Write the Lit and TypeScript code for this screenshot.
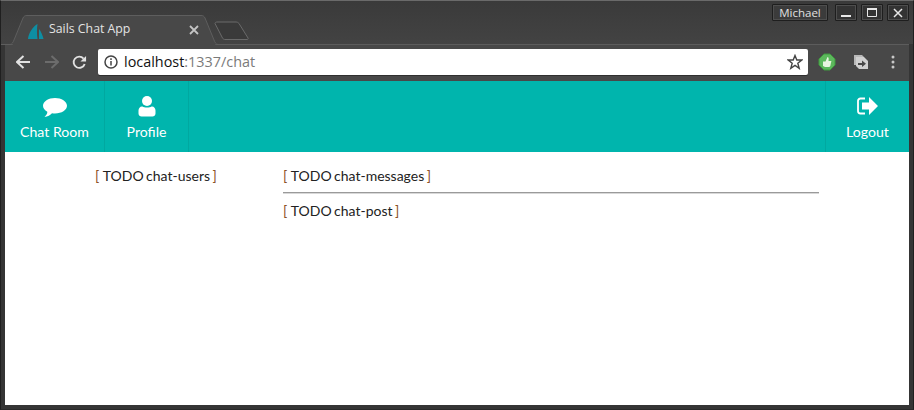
import { LitElement, html, css } from "lit";
import { customElement } from "lit/decorators.js";

@customElement("app-root")
export class AppRoot extends LitElement {
  static styles = css`
    :host { display: block; width: 914px; height: 410px; overflow: hidden; }
    * { box-sizing: border-box; }
    .window { width: 914px; height: 410px; display: flex; flex-direction: column; background: #353535; border-top: 1px solid #6a6a6a; border-left: 1px solid #1f1f1f; border-right: 1px solid #1f1f1f; border-bottom: 1px solid #2a2a2a; padding: 0 4px 4px 4px; }
    .strip { height: 43px; flex: none; margin: 0 -4px; padding: 0 4px; background: linear-gradient(#3a3a3a, #434343); display: flex; position: relative; z-index: 1; }
    .tab { position: absolute; left: 0; top: -1px; }
    .tab-label { position: absolute; left: 48px; top: 19px; font: 12.3px/18px "Open Sans", sans-serif; color: #e4e4e4; white-space: nowrap; }
    .tab-close { position: absolute; left: 188px; top: 24px; }
    .sail { position: absolute; left: 26px; top: 22px; }
    .controls { position: absolute; right: 4px; top: 3px; display: flex; gap: 4px; align-items: flex-start; }
    .user { width: 56px; height: 17px; margin-right: 3px; border: 1px solid #1e1e1e; outline: 1px solid #4e4e4e; outline-offset: -2px; background: #3b3b3b; color: #e0e0e0; font: 11.5px/15px "Open Sans", sans-serif; text-align: center; border-radius: 1px; }
    .ctl { width: 22px; height: 17px; border: 1px solid #1e1e1e; outline: 1px solid #4e4e4e; outline-offset: -2px; background: #333; display: flex; align-items: center; justify-content: center; border-radius: 1px; }
    .toolbar { height: 37px; flex: none; background: #484848; border-top: 1px solid #5c5c5c; display: flex; align-items: center; padding: 0 0 2px 0; position: relative; }
    .nav-ic { display: flex; justify-content: center; margin-top: 1px; }
    .back { width: 26px; margin-left: 5px; }
    .fwd { width: 16px; }
    .reload { width: 26px; }
    .navs { display: flex; gap: 7px; margin-right: 6px; }
    .omni { width: 710px; height: 26px; background: #fff; border-radius: 2px; display: flex; align-items: center; padding: 0 5px 0 6px; box-shadow: 0 1px 0 #2f2f2f; font: 14.4px/18px "Open Sans", sans-serif; }
    .url { margin-left: 6px; flex: 1; color: #111; }
    .url span { color: #7a7a7a; }
    .ext { display: flex; align-items: center; margin-left: 10px; }
    .ext1 { margin-right: 7px; }
    .ext2 { margin-right: 22px; }
    .bar { height: 71px; flex: none; background: #00b5ad; display: flex; justify-content: space-between; font: 14.1px/18px Lato, sans-serif; color: #fff; }
    .bar-group { display: flex; }
    .item { display: flex; flex-direction: column; align-items: center; padding-top: 14px; border-right: 1px solid #00a8a0; height: 71px; }
    .item svg { height: 26px; display: block; }
    .item div { margin-top: 2px; }
    .i1 { width: 100px; }
    .i2 { width: 84px; }
    .i3 { width: 84px; border-right: none; border-left: 1px solid #00a8a0; }
    .page { flex: 1; background: #fff; display: flex; font: 14px/18px Lato, sans-serif; word-spacing: -0.1px; color: #222; padding: 15px 90px 0 91px; }
    .users { width: 187px; flex: none; margin-left: -1px; margin-right: 1px; }
    .main { flex: 1; }
    .sep { border-top: 1px solid #9a9a9a; border-bottom: 1px solid #d8d8d8; height: 2px; margin: 7px 0 8px; }
    .b { color: #8c5226; }
    .t { word-spacing: -1.2px; margin-right: -1px; }
  `;

  render() {
    return html`<div class="window">
      <div class="strip">
        <svg class="tab" width="260" height="47" viewBox="0 0 260 47">
          <path d="M13 40L22 18C23 16 24 15.500 26 15.500H200C202 15.500 203 16 204 18L213 40L215 47H11Z" fill="#484848"/>
          <path d="M0 44.500H9C11 44.500 12 42.500 13 40L22 18C23 16 24 15.500 26 15.500H200C202 15.500 203 16 204 18L213 40C214 42.500 215 44.500 217 44.500" fill="none" stroke="#5e5e5e"/>
          <path d="M214 23.500C214 22.500 215 22 216 22H235C236.500 22 237 22.500 238 23.500L247 38C247.500 39 247 39.500 246 39.500H224C223 39.500 222 39 221.500 38Z" fill="#3a3a3a" stroke="#6a6a6a"/>
        </svg>
        <svg class="sail" width="18" height="17" viewBox="0 0 18 17">
          <path d="M1 16C1.500 10 6 3.500 10.500 1C9.800 6 9.800 11 10.500 16Z" fill="#0e8ea3"/>
          <path d="M12 6C14 8.500 15.500 12 16.500 16H12Z" fill="#0e8ea3"/>
        </svg>
        <span class="tab-label">Sails Chat App</span>
        <svg class="tab-close" width="10" height="10" viewBox="0 0 10 10"><path d="M1 1L9 9M9 1L1 9" stroke="#c4c4c4" stroke-width="1.800"/></svg>
        <div class="controls">
          <div class="user">Michael</div>
          <div class="ctl"><svg width="10" height="10" viewBox="0 0 10 10"><path d="M0 8H10" stroke="#e8e8e8" stroke-width="2"/></svg></div>
          <div class="ctl"><svg width="10" height="9" viewBox="0 0 10 9"><path d="M.5 1.500H9.500V8.500H.5Z" fill="none" stroke="#e8e8e8"/><path d="M0 1H10" stroke="#e8e8e8" stroke-width="2"/></svg></div>
          <div class="ctl"><svg width="10" height="10" viewBox="0 0 10 10"><path d="M1 1L9 9M9 1L1 9" stroke="#e8e8e8" stroke-width="1.500"/></svg></div>
        </div>
      </div>
      <div class="toolbar">
        <div class="navs">
          <div class="nav-ic back"><svg width="15" height="14" viewBox="1 1 15 14"><path d="M15 8H2.500M8.500 2L2 8L8.500 14" fill="none" stroke="#e2e2e2" stroke-width="2"/></svg></div>
          <div class="nav-ic fwd"><svg width="15" height="14" viewBox="0 1 15 14"><path d="M1 8H13.500M7.500 2L14 8L7.500 14" fill="none" stroke="#6c6c6c" stroke-width="2"/></svg></div>
          <div class="nav-ic reload"><svg width="15" height="15" viewBox="0 0 16 16"><path d="M13.500 9.500A6 6 0 1 1 12.300 3.800" fill="none" stroke="#e2e2e2" stroke-width="2"/><path d="M15 1V7H9Z" fill="#e2e2e2"/></svg></div>
        </div>
        <div class="omni">
          <svg width="14" height="14" viewBox="0 0 14 14"><circle cx="7" cy="7" r="6" fill="none" stroke="#444" stroke-width="1.500"/><path d="M7 6V10.500M7 3.200V5" stroke="#444" stroke-width="1.500"/></svg>
          <div class="url">localhost<span>:1337/chat</span></div>
          <svg width="16" height="16" viewBox="0 0 16 16"><path d="M8 1.500L9.800 6H14.800L10.800 9.200L12.200 14.300L8 11.400L3.800 14.300L5.200 9.200L1.200 6H6.200Z" fill="none" stroke="#444" stroke-width="1.400"/></svg>
        </div>
        <div class="ext ext1">
          <svg width="18" height="18" viewBox="0 0 18 18"><path d="M6 1H12L17 6V12L12 17H6L1 12V6Z" fill="#5cb85c" stroke="#3f9a3f"/><path d="M5 8.500H7.500L9.500 4C10.500 4 11 5 10.500 8H13C13.500 8 13.500 9 13 9.500L12.300 13C12 13.500 11.500 14 11 14H7L5 13Z" fill="#e8f5e0"/></svg>
        </div>
        <div class="ext ext2">
          <svg width="16" height="16" viewBox="0 0 16 16"><path d="M1 1H9L11 3H3V11H1Z" fill="#b8b8b8"/><path d="M3 3H11L15 7V15H6L3 12Z" fill="#d0d0d0"/><path d="M5 9H9V6.500L13 9.800L9 13V11H5Z" fill="#484848"/></svg>
        </div>
        <svg width="4" height="14" viewBox="0 0 4 14"><circle cx="2" cy="2" r="1.500" fill="#c8c8c8"/><circle cx="2" cy="7" r="1.500" fill="#c8c8c8"/><circle cx="2" cy="12" r="1.500" fill="#c8c8c8"/></svg>
      </div>
      <div class="bar">
        <div class="bar-group">
          <div class="item i1">
            <svg width="24" height="26" viewBox="0 0 24 26"><path d="M12 3C18.600 3 24 6.400 24 10.800C24 15.200 18.600 18.500 12 18.500C11 18.500 10 18.400 9 18.300C7.500 20.200 4.500 21.800 1.500 21.900C3.500 20.200 4.500 18.300 4.300 16.800C1.600 15.300 0 13.200 0 10.800C0 6.400 5.400 3 12 3Z" fill="#fff"/></svg>
            <div>Chat Room</div>
          </div>
          <div class="item i2">
            <svg width="18" height="26" viewBox="0 0 18 26"><circle cx="9" cy="6" r="5" fill="#fff"/><path d="M0.500 15.500C0.500 13 2.500 11 4.500 11.500C6 12.800 12 12.800 13.500 11.500C15.500 11 17.500 13 17.500 15.500V18.500C17.500 20.500 16 21.500 14.500 21.500H3.500C2 21.500 .5 20.500 .5 18.500Z" fill="#fff"/></svg>
            <div>Profile</div>
          </div>
        </div>
        <div class="item i3">
          <svg width="22" height="26" viewBox="0 0 22 26"><path d="M8 3.500H3.500C2 3.500 1 4.500 1 6V16C1 17.500 2 18.500 3.500 18.500H8" fill="none" stroke="#fff" stroke-width="1.800"/><path d="M5 7.500H12V2L21 11L12 20V14.500H5Z" fill="#fff"/></svg>
          <div>Logout</div>
        </div>
      </div>
      <div class="page">
        <div class="users"><span class="b">[</span> <span class="t">TODO chat-users</span> <span class="b">]</span></div>
        <div class="main">
          <div><span class="b">[</span> <span class="t">TODO chat-messages</span> <span class="b">]</span></div>
          <div class="sep"></div>
          <div><span class="b">[</span> <span class="t">TODO chat-post</span> <span class="b">]</span></div>
        </div>
      </div>
    </div>`;
  }
}
